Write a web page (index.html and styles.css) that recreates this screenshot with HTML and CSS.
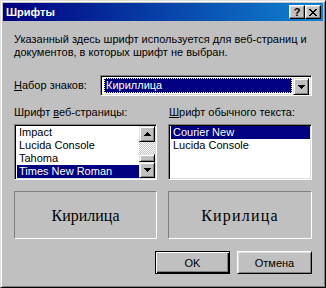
FILE: index.html
```html
<!DOCTYPE html>
<html>
<head>
<meta charset="utf-8">
<link rel="stylesheet" href="styles.css">
</head>
<body>
<div class="window">
  <div class="titlebar">
    <span class="title">Шрифты</span>
    <div class="tbuttons">
      <span class="tbtn help">?</span>
      <span class="tbtn close"><svg width="8" height="7" viewBox="0 0 8 7"><path d="M0 0h2v1h-2zM6 0h2v1h-2zM1 1h2v1h-2zM5 1h2v1h-2zM2 2h4v1h-4zM3 3h2v1h-2zM2 4h4v1h-4zM1 5h2v1h-2zM5 5h2v1h-2zM0 6h2v1h-2zM6 6h2v1h-2z" fill="#000"/></svg></span>
    </div>
  </div>
  <div class="content">
    <p class="desc">Указанный здесь шрифт используется для веб-страниц и<br>документов, в которых шрифт не выбран.</p>
    <div class="charset">
      <span class="label"><u>Н</u>абор знаков:</span>
      <div class="combo">
        <div class="combo-value"><span class="sel">Кириллица</span></div>
        <span class="arrowbtn"><svg width="7" height="4" viewBox="0 0 7 4"><path d="M0 0h7v1h-7zM1 1h5v1h-5zM2 2h3v1h-3zM3 3h1v1h-1z" fill="#000"/></svg></span>
      </div>
    </div>
    <div class="cols">
      <span class="label">Шрифт <u>в</u>еб-страницы:</span>
      <span class="label right"><u>Ш</u>рифт обычного текста:</span>
      <div class="listbox">
        <ul class="items">
          <li>Impact</li>
          <li>Lucida Console</li>
          <li>Tahoma</li>
          <li class="selected">Times New Roman</li>
        </ul>
        <div class="scrollbar">
          <span class="sbtn"><svg width="7" height="4" viewBox="0 0 7 4"><path d="M3 0h1v1h-1zM2 1h3v1h-3zM1 2h5v1h-5zM0 3h7v1h-7z" fill="#000"/></svg></span>
          <span class="track"></span>
          <span class="thumb"></span>
          <span class="sbtn"><svg width="7" height="4" viewBox="0 0 7 4"><path d="M0 0h7v1h-7zM1 1h5v1h-5zM2 2h3v1h-3zM3 3h1v1h-1z" fill="#000"/></svg></span>
        </div>
      </div>
      <div class="listbox">
        <ul class="items">
          <li class="selected">Courier New</li>
          <li>Lucida Console</li>
        </ul>
      </div>
      <div class="preview serif">Кирилица</div>
      <div class="preview mono">Кирилица</div>
    </div>
    <div class="actions">
      <button class="btn default">OK</button>
      <button class="btn">Отмена</button>
    </div>
  </div>
</div>
</body>
</html>
```
FILE: styles.css
```css
* { box-sizing: border-box; }
html, body { margin: 0; padding: 0; background: #c0c0c0; }
body {
  font-family: "Liberation Sans", Arial, sans-serif;
  font-size: 11px;
  color: #000;
}
.window {
  width: 326px;
  height: 288px;
  background: #c0c0c0;
  border: 1px solid;
  border-color: #dfdfdf #000 #000 #dfdfdf;
  box-shadow: inset 1px 1px #fff, inset -1px -1px #808080;
  padding: 2px;
  display: flex;
  flex-direction: column;
}
.titlebar {
  height: 18px;
  background: linear-gradient(to right, #000080, #1084d0);
  display: flex;
  align-items: center;
  justify-content: space-between;
  padding: 0 2px 0 3px;
}
.title {
  color: #fff;
  font-weight: bold;
  font-size: 11px;
  line-height: 13px;
}
.tbuttons { display: flex; }
.tbtn {
  width: 16px;
  height: 14px;
  background: #c0c0c0;
  border: 1px solid;
  border-color: #fff #000 #000 #fff;
  box-shadow: inset -1px -1px #808080, inset 1px 1px #dfdfdf;
  display: flex;
  align-items: center;
  justify-content: center;
}
.help {
  font-weight: bold;
  font-size: 11px;
  line-height: 12px;
}
.close svg { display: block; }
.content {
  flex: 1;
  padding: 12px 11px 0 11px;
  display: flex;
  flex-direction: column;
}
.desc {
  margin: 0;
  line-height: 13px;
  white-space: nowrap;
}
.charset {
  margin-top: 16px;
  display: flex;
  align-items: center;
}
.label { line-height: 13px; white-space: nowrap; }
.charset .label { width: 86px; }
.combo {
  width: 212px;
  height: 21px;
  background: #fff;
  border: 1px solid;
  border-color: #808080 #fff #fff #808080;
  box-shadow: inset 1px 1px #000, inset -1px -1px #dfdfdf;
  padding: 2px;
  display: flex;
}
.combo-value {
  flex: 1;
  padding: 0 1px;
  display: flex;
}
.sel {
  flex: 1;
  background: #000080;
  color: #fff;
  border: 1px dotted #ffff80;
  line-height: 13px;
  padding-left: 1px;
}
.arrowbtn {
  width: 16px;
  height: 17px;
  background: #c0c0c0;
  border: 1px solid;
  border-color: #dfdfdf #000 #000 #dfdfdf;
  box-shadow: inset 1px 1px #fff, inset -1px -1px #808080;
  display: flex;
  align-items: center;
  justify-content: center;
}
.arrowbtn svg, .sbtn svg { display: block; }
.cols {
  margin-top: 10px;
  display: grid;
  grid-template-columns: 143px 144px;
  column-gap: 11px;
  grid-template-rows: 13px 56px 54px;
  row-gap: 5px;
}
.cols .right { padding-left: 1px; }
.cols .preview { margin-top: 6px; }
.listbox {
  background: #fff;
  border: 1px solid;
  border-color: #808080 #fff #fff #808080;
  box-shadow: inset 1px 1px #000, inset -1px -1px #dfdfdf;
  padding: 1px;
  display: flex;
}
.items {
  list-style: none;
  margin: 0;
  padding: 0 0 0 1px;
  flex: 1;
}
.items li {
  height: 13px;
  line-height: 13px;
  padding-left: 2px;
  white-space: nowrap;
}
.items li.selected { background: #000080; color: #fff; }
.scrollbar {
  width: 16px;
  display: flex;
  flex-direction: column;
}
.sbtn {
  height: 16px;
  background: #c0c0c0;
  border: 1px solid;
  border-color: #dfdfdf #000 #000 #dfdfdf;
  box-shadow: inset 1px 1px #fff, inset -1px -1px #808080;
  display: flex;
  align-items: center;
  justify-content: center;
}
.track {
  flex: 1;
  background: repeating-conic-gradient(#fff 0 25%, #c0c0c0 0 50%) 0 0 / 2px 2px;
}
.thumb {
  height: 8px;
  background: #c0c0c0;
  border: 1px solid;
  border-color: #dfdfdf #000 #000 #dfdfdf;
  box-shadow: inset 1px 1px #fff, inset -1px -1px #808080;
}
.preview {
  border: 1px solid;
  border-color: #808080 #fff #fff #808080;
  display: flex;
  align-items: center;
  justify-content: center;
  font-size: 16px;
  padding-top: 1px;
  font-family: "Liberation Serif", "Times New Roman", serif;
}
.mono { letter-spacing: 1.2px; }
.actions {
  margin-top: 12px;
  display: flex;
  justify-content: flex-end;
  gap: 7px;
}
.btn {
  width: 75px;
  height: 23px;
  font-family: "Liberation Sans", Arial, sans-serif;
  font-size: 11px;
  color: #000;
  background: #c0c0c0;
  border: 1px solid;
  border-color: #fff #000 #000 #fff;
  box-shadow: inset 1px 1px #dfdfdf, inset -1px -1px #808080;
  padding: 0;
  margin: 0;
}
.btn.default {
  border: 1px solid #000;
  box-shadow: inset 1px 1px #fff, inset -1px -1px #000, inset -2px -2px #808080;
}
```
